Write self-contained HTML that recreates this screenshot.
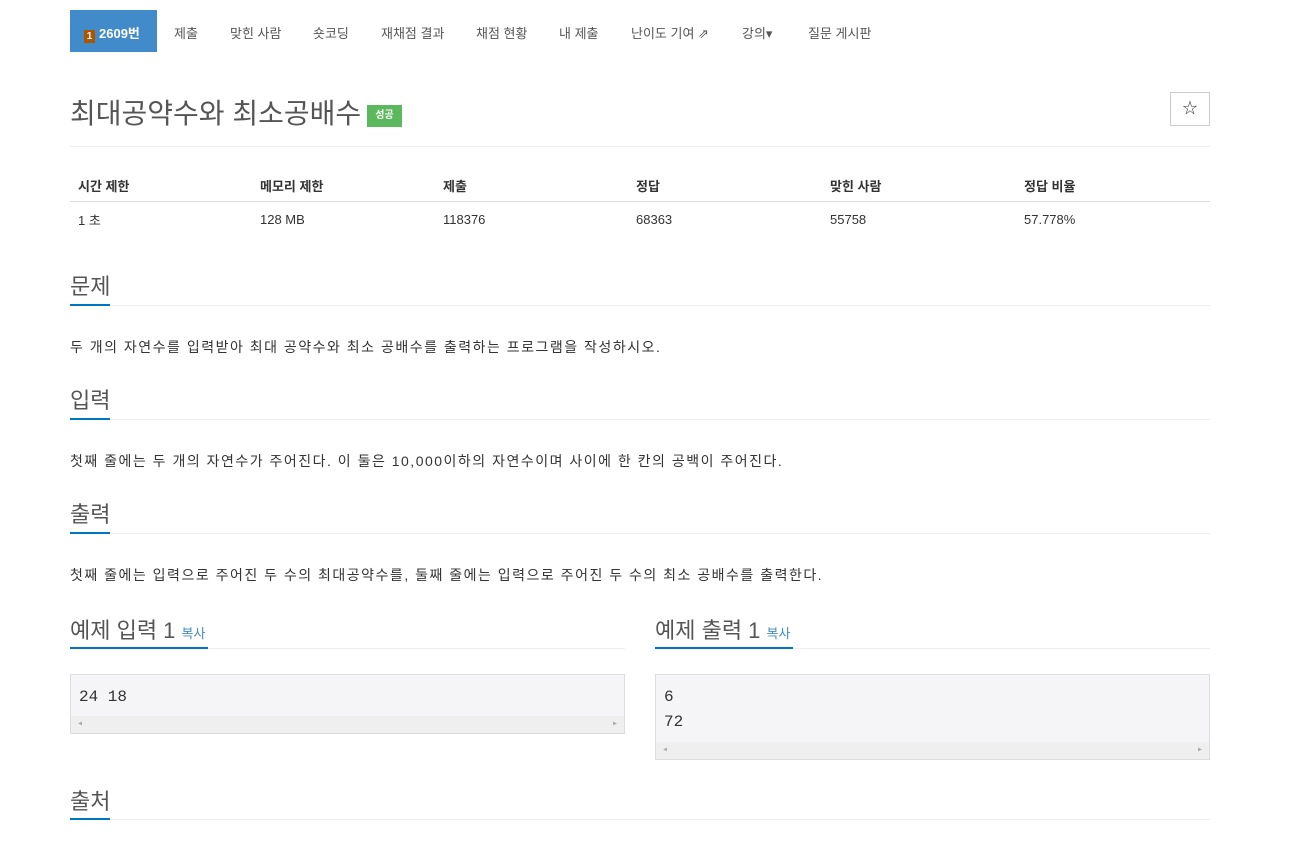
<!DOCTYPE html>
<html><head><meta charset="utf-8"><style>
*{margin:0;padding:0;box-sizing:border-box}
body{width:1309px;height:846px;background:#fff;font-family:"Liberation Sans","Noto Sans CJK KR",sans-serif;color:#333;position:relative;overflow:hidden}
.a{position:absolute;white-space:nowrap}
.nav{font-size:13px;color:#555;top:23px}
.h{font-size:22px;color:#555}
.ul{position:absolute;height:2px;background:#0076c0}
.ln{position:absolute;height:1px;background:#eee}
.p{font-size:14px;color:#333;letter-spacing:1.5px}
.th{font-size:13px;font-weight:bold;top:176px}
.td{font-size:13px;top:211px}
.pre{position:absolute;background:#f5f5f7;border:1px solid #ddd;font-family:"Liberation Mono",monospace;font-size:16px;color:#333;padding:12px 8px;line-height:25px}
.sb{position:absolute;left:0;right:0;bottom:0;height:17px;background:#efefef;font-size:10px;color:#aaa;line-height:17px}
</style></head><body>
<div class="a" style="left:70px;top:10px;width:87px;height:42px;background:#428bca;color:#fff;font-size:13px;font-weight:bold;padding-top:13px;padding-left:14px"><span style="display:inline-block;width:11px;height:13px;background:#ad5600;color:#fff;font-size:10px;text-align:center;line-height:13px;vertical-align:-1px;margin-right:4px">1</span>2609번</div>
<div class="a nav" style="left:174px">제출</div>
<div class="a nav" style="left:230px">맞힌 사람</div>
<div class="a nav" style="left:313px">숏코딩</div>
<div class="a nav" style="left:381px">재채점 결과</div>
<div class="a nav" style="left:476px">채점 현황</div>
<div class="a nav" style="left:559px">내 제출</div>
<div class="a nav" style="left:631px">난이도 기여 ⇗</div>
<div class="a nav" style="left:742px">강의▾</div>
<div class="a nav" style="left:808px">질문 게시판</div>

<div class="a" style="left:70px;top:92px;font-size:28px;color:#555">최대공약수와 최소공배수</div>
<div class="a" style="left:367px;top:105px;width:35px;height:22px;background:#5cb85c;color:#fff;font-size:10px;font-weight:bold;text-align:center;line-height:22px">성공</div>
<div class="a" style="left:1170px;top:92px;width:40px;height:34px;border:1px solid #ccc;text-align:center;line-height:32px;font-size:15px">☆</div>
<div class="ln" style="left:70px;top:146px;width:1140px"></div>

<div class="a th" style="left:78px">시간 제한</div>
<div class="a th" style="left:260px">메모리 제한</div>
<div class="a th" style="left:443px">제출</div>
<div class="a th" style="left:636px">정답</div>
<div class="a th" style="left:830px">맞힌 사람</div>
<div class="a th" style="left:1024px">정답 비율</div>
<div class="ln" style="left:70px;top:201px;width:1140px;background:#ddd"></div>
<div class="a td" style="left:78px;top:210px">1 초</div>
<div class="a td" style="left:260px;top:212px">128 MB</div>
<div class="a td" style="left:443px;top:212px">118376</div>
<div class="a td" style="left:636px;top:212px">68363</div>
<div class="a td" style="left:830px;top:212px">55758</div>
<div class="a td" style="left:1024px;top:212px">57.778%</div>

<div class="a h" style="left:70px;top:269px">문제</div>
<div class="ln" style="left:70px;top:305px;width:1140px"></div><div class="ul" style="left:70px;top:304px;width:40px"></div>
<div class="a p" style="left:70px;top:337px">두 개의 자연수를 입력받아 최대 공약수와 최소 공배수를 출력하는 프로그램을 작성하시오.</div>

<div class="a h" style="left:70px;top:383px">입력</div>
<div class="ln" style="left:70px;top:419px;width:1140px"></div><div class="ul" style="left:70px;top:418px;width:40px"></div>
<div class="a p" style="left:70px;top:451px">첫째 줄에는 두 개의 자연수가 주어진다. 이 둘은 10,000이하의 자연수이며 사이에 한 칸의 공백이 주어진다.</div>

<div class="a h" style="left:70px;top:497px">출력</div>
<div class="ln" style="left:70px;top:533px;width:1140px"></div><div class="ul" style="left:70px;top:532px;width:40px"></div>
<div class="a p" style="left:70px;top:565px">첫째 줄에는 입력으로 주어진 두 수의 최대공약수를, 둘째 줄에는 입력으로 주어진 두 수의 최소 공배수를 출력한다.</div>

<div class="a h" style="left:70px;top:613px">예제 입력 1 <span style="font-size:13px;color:#428bca">복사</span></div>
<div class="ln" style="left:70px;top:648px;width:555px"></div><div class="ul" style="left:70px;top:647px;width:138px"></div>
<div class="pre" style="left:70px;top:674px;width:555px;height:60px;padding-top:10px">24 18<div class="sb">&nbsp;◂<span style="float:right">▸&nbsp;</span></div></div>

<div class="a h" style="left:655px;top:613px">예제 출력 1 <span style="font-size:13px;color:#428bca">복사</span></div>
<div class="ln" style="left:655px;top:648px;width:555px"></div><div class="ul" style="left:655px;top:647px;width:138px"></div>
<div class="pre" style="left:655px;top:674px;width:555px;height:86px;padding-top:10px">6<br>72<div class="sb">&nbsp;◂<span style="float:right">▸&nbsp;</span></div></div>

<div class="a h" style="left:70px;top:784px">출처</div>
<div class="ln" style="left:70px;top:819px;width:1140px"></div><div class="ul" style="left:70px;top:818px;width:40px"></div>
</body></html>
